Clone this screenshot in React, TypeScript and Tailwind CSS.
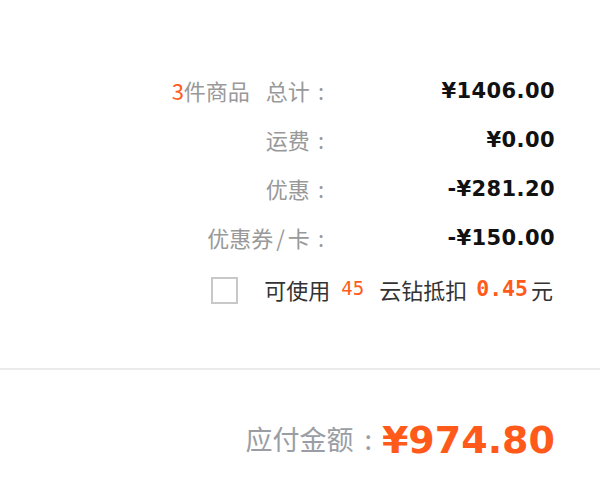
const cjk = { fontFamily: '"Noto Sans CJK SC", "Noto Sans", sans-serif' };
const num = { fontFamily: '"DejaVu Sans", "Noto Sans", sans-serif' };
const mono = { fontFamily: '"DejaVu Sans Mono", "Liberation Mono", monospace' };

function Row({ label, value }: { label: React.ReactNode; value: string }) {
  return (
    <div className="flex h-[49px] items-center justify-end">
      <div className="flex items-center pb-[4px] text-[22px] leading-none text-[#999]" style={cjk}>
        {label}
        <span className="ml-[8px] mr-[3px]">:</span>
      </div>
      <div className="w-[228px] text-right text-[21px] font-bold leading-none tracking-[0.4px] text-[#111]" style={num}>
        {value}
      </div>
    </div>
  );
}

export default function App() {
  return (
    <div className="h-[485px] w-[600px] overflow-hidden bg-white">
      <div className="pr-[45px] pt-[67px]">
        <Row
          label={
            <>
              <span className="mr-[16px]">
                <span className="text-[#ff5a1a]">3</span>件商品
              </span>
              总计
            </>
          }
          value="¥1406.00"
        />
        <Row label="运费" value="¥0.00" />
        <Row label="优惠" value="-¥281.20" />
        <Row
          label={
            <>
              优惠券<span className="px-[3px]">/</span>卡
            </>
          }
          value="-¥150.00"
        />
        <div className="flex h-[54px] items-center justify-end">
          <span className="mr-[26px] h-[27px] w-[27px] border-2 border-[#c8c8c8] bg-white" />
          <div className="mr-[2px] flex items-center pb-[3px] text-[22px] leading-none text-[#333]" style={cjk}>
            <span>可使用</span>
            <span className="ml-[11px] mr-[15px] text-[19px] text-[#ff5a1a]" style={mono}>45</span>
            <span>云钻抵扣</span>
            <span className="ml-[9px] mr-[3px] text-[21.5px] font-bold text-[#ff5a1a]" style={mono}>0.45</span>
            <span>元</span>
          </div>
        </div>
      </div>
      <div className="mt-[51px] h-[2px] bg-[#ebebeb]" />
      <div className="flex items-center justify-end pr-[45px] pt-[51px]">
        <span className="pb-[3px] text-[27px] leading-none text-[#9a9ea4]" style={cjk}>
          应付金额
        </span>
        <span className="ml-[11px] mr-[10px] pb-[3px] text-[27px] leading-none text-[#9a9ea4]" style={cjk}>
          :
        </span>
        <span className="text-[38px] font-bold leading-none text-[#ff5a1a]" style={num}>
          ¥974.80
        </span>
      </div>
    </div>
  );
}
